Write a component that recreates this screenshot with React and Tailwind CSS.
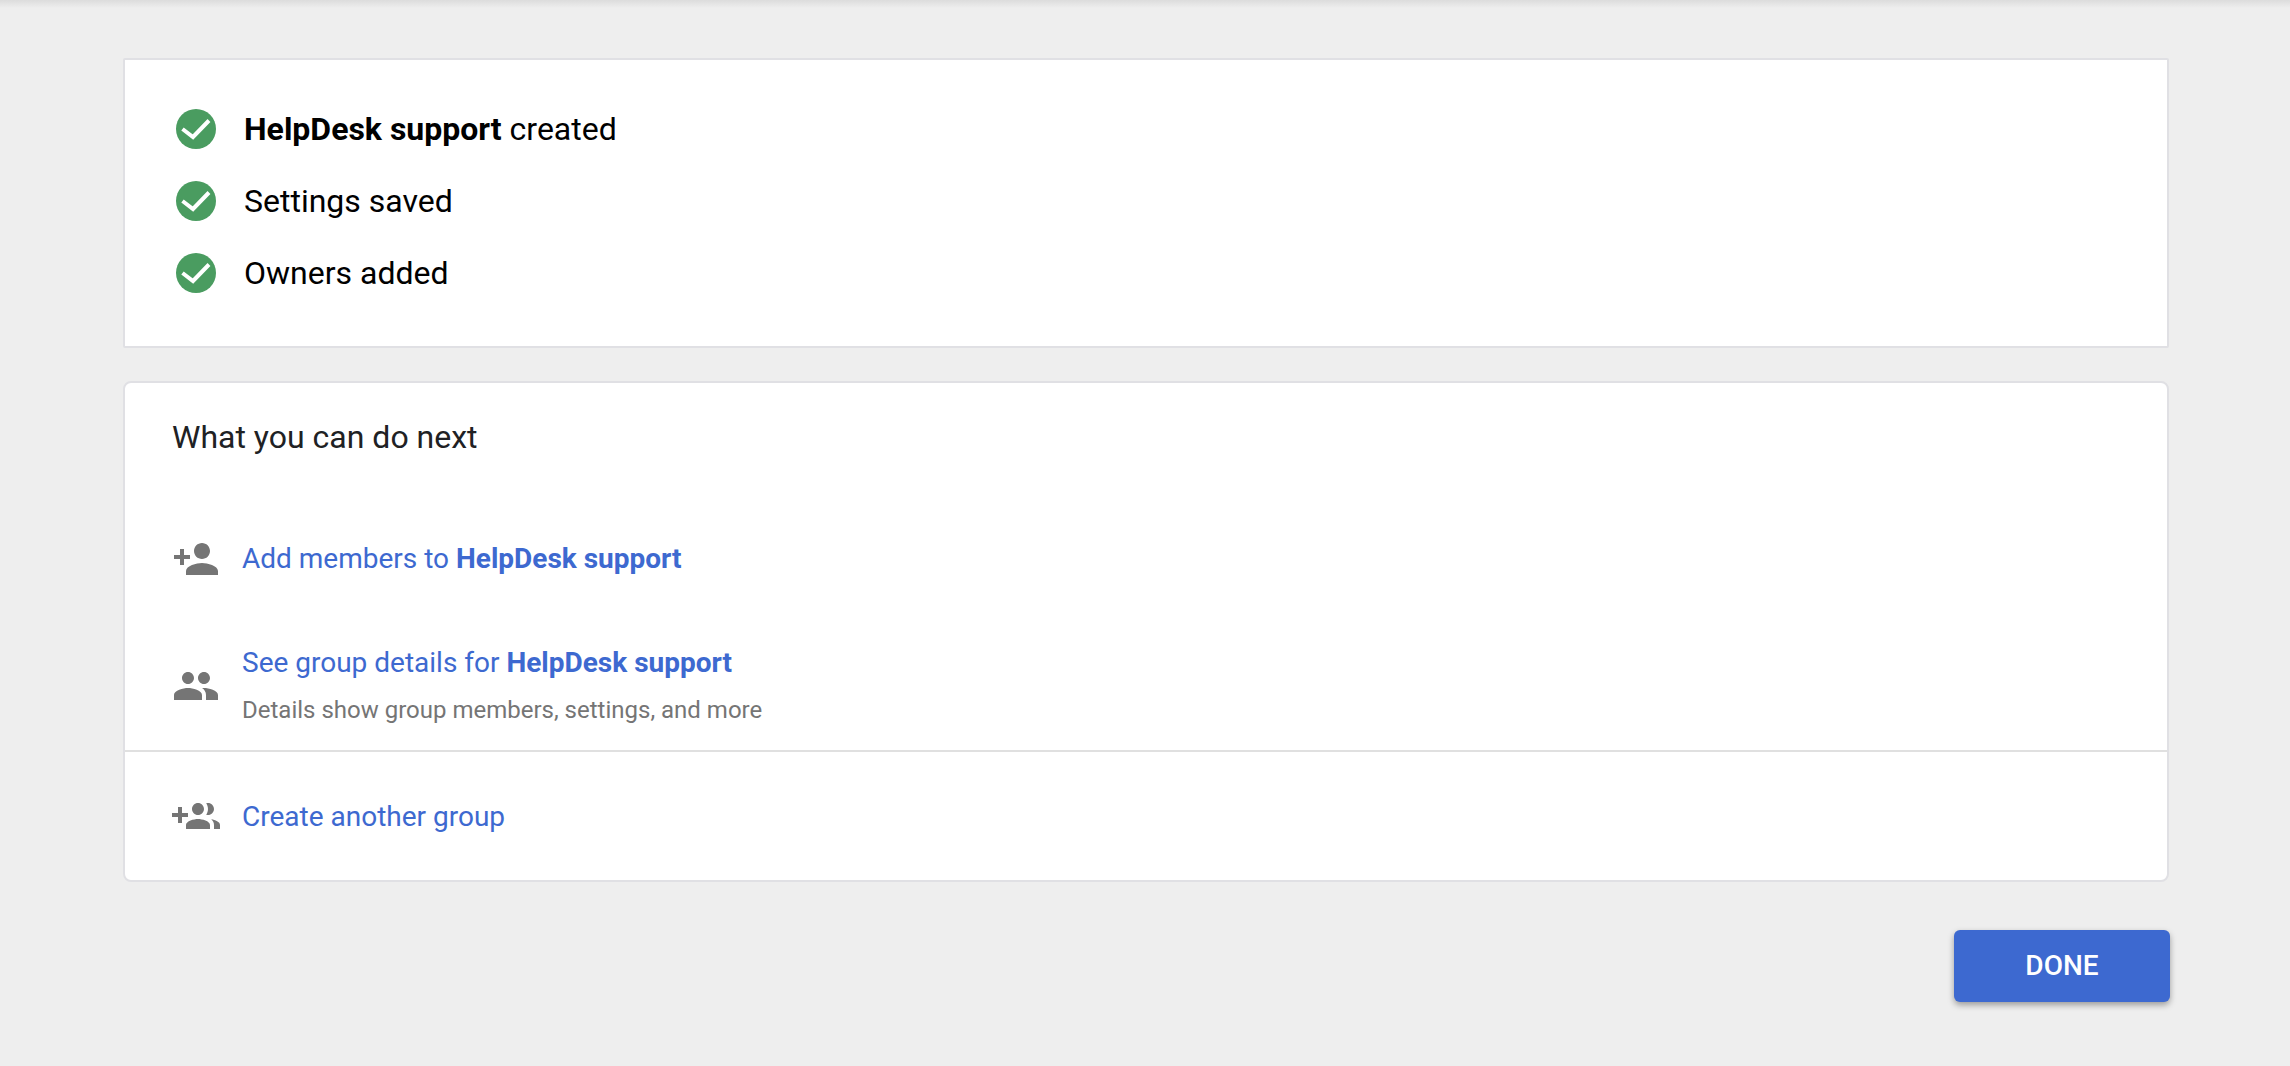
import React from 'react';

const roboto = { fontFamily: 'Roboto, sans-serif' };

const CheckIcon = () => (
  <svg width="40" height="40" viewBox="0 0 40 40" className="shrink-0">
    <circle cx="20" cy="20" r="20" fill="#4a9c60" />
    <path d="M6.5 20 L17 28 L33 11.5" fill="none" stroke="#fff" strokeWidth="4" />
  </svg>
);

const AddPerson = () => (
  <svg width="48" height="48" viewBox="0 0 24 24" fill="#757575" className="shrink-0">
    <path d="M15 12c2.21 0 4-1.79 4-4s-1.79-4-4-4-4 1.79-4 4 1.79 4 4 4zm-9-2V7H4v3H1v2h3v3h2v-3h3v-2H6zm9 4c-2.67 0-8 1.34-8 4v2h16v-2c0-2.66-5.33-4-8-4z" />
  </svg>
);

const People = () => (
  <svg width="48" height="48" viewBox="0 0 24 24" fill="#757575" className="shrink-0">
    <path d="M16 11c1.66 0 2.99-1.34 2.99-3S17.66 5 16 5c-1.66 0-3 1.34-3 3s1.34 3 3 3zm-8 0c1.66 0 2.99-1.34 2.99-3S9.66 5 8 5C6.34 5 5 6.34 5 8s1.34 3 3 3zm0 2c-2.33 0-7 1.17-7 3.5V19h14v-2.5c0-2.33-4.67-3.5-7-3.5zm8 0c-.29 0-.62.02-.97.05 1.16.84 1.97 1.97 1.97 3.45V19h6v-2.5c0-2.33-4.67-3.5-7-3.5z" />
  </svg>
);

const AddGroup = () => (
  <svg width="48" height="48" viewBox="0 0 24 24" fill="#757575" className="shrink-0">
    <path d="M8 10H5V7H3v3H0v2h3v3h2v-3h3v-2zm10 1c1.66 0 2.99-1.34 2.99-3S19.66 5 18 5c-.32 0-.63.05-.91.14.57.81.9 1.79.9 2.86s-.34 2.04-.9 2.86c.28.09.59.14.91.14zm-5 0c1.66 0 2.99-1.34 2.99-3S14.66 5 13 5s-3 1.34-3 3 1.34 3 3 3zm6.62 2.16c.83.73 1.38 1.66 1.38 2.84v2h3v-2c0-1.54-2.37-2.49-4.38-2.84zM13 13c-2 0-6 1-6 3v2h12v-2c0-2-4-3-6-3z" />
  </svg>
);

const Status = ({ children }) => (
  <div className="flex h-[72px] items-center gap-[28px]">
    <CheckIcon />
    <span className="text-[32px] text-black">{children}</span>
  </div>
);

export default function App() {
  return (
    <div style={roboto} className="relative min-h-[1066px] bg-[#eeeeee] pl-[123px] pr-[121px] pt-[58px]">
      <div className="absolute inset-x-0 top-0 h-[8px] bg-gradient-to-b from-[#dcdcdc] to-[#eeeeee]" />

      <section className="h-[290px] rounded-[2px] border-2 border-[#e0e0e4] bg-white pl-[51px] pt-[33px]">
        <Status><b className="font-bold">HelpDesk support</b> created</Status>
        <Status>Settings saved</Status>
        <Status>Owners added</Status>
      </section>

      <section className="mt-[33px] h-[501px] rounded-[8px] border-2 border-[#e0e0e4] bg-white">
        <h2 className="pl-[47px] pt-[34px] text-[32px] leading-[40px] font-normal text-[#202124]">What you can do next</h2>

        <div className="mt-[72px] flex h-[60px] items-center gap-[22px] pl-[47px] text-[#3d69d0]">
          <AddPerson />
          <span className="text-[28px]">Add members to <b className="font-bold">HelpDesk support</b></span>
        </div>

        <div className="mt-[52px] flex gap-[22px] pl-[47px]">
          <div className="pt-[21px]"><People /></div>
          <div>
            <div className="text-[28px] leading-[44px] text-[#3d69d0]">See group details for <b className="font-bold">HelpDesk support</b></div>
            <div className="mt-[7px] text-[24px] leading-[36px] text-[#757575]">Details show group members, settings, and more</div>
          </div>
        </div>

        <div className="mt-[22px] flex h-[127px] items-center gap-[22px] border-t-2 border-[#e0e0e0] pl-[47px] pt-[5px] text-[#3d69d0]">
          <AddGroup />
          <span className="text-[28px]">Create another group</span>
        </div>
      </section>

      <div className="mt-[48px] flex justify-end">
        <button className="-mr-[1px] h-[72px] w-[216px] rounded-[6px] bg-[#3d69d0] text-[28px] font-medium text-white shadow-[0_3px_6px_rgba(0,0,0,0.35)]">DONE</button>
      </div>
    </div>
  );
}
